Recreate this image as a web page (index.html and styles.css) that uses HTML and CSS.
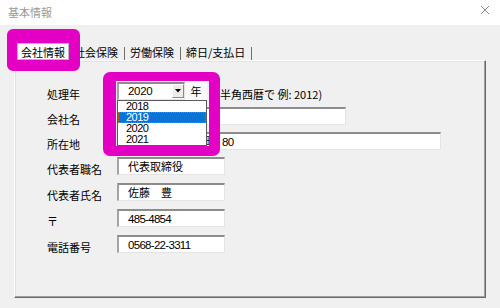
FILE: index.html
```html
<!DOCTYPE html>
<html lang="ja">
<head>
<meta charset="utf-8">
<title>基本情報</title>
<link rel="stylesheet" href="styles.css">
</head>
<body>
<div class="window">
  <div class="titlebar">
    <span class="title">基本情報</span>
    <svg class="close" width="10" height="10" viewBox="0 0 10 10"><path d="M1 1L9 9M9 1L1 9" stroke="#8a8a8a" stroke-width="1"/></svg>
  </div>
  <div class="client">
    <div class="tabs">
      <div class="tab active">会社情報</div>
      <div class="tab">社会保険</div>
      <div class="tab">労働保険</div>
      <div class="tab">締日/支払日</div>
    </div>
    <div class="panel">
      <div class="form">
        <div class="row">
          <span class="label">処理年</span>
          <div class="combo">
            <span class="combo-value">2020</span>
            <span class="combo-btn"><svg width="6" height="4" viewBox="0 0 6 4"><path d="M0 0H6L3 3.5Z" fill="#000"/></svg></span>
          </div>
          <span class="unit">年</span>
          <span class="hint">（半角西暦で 例: 2012)</span>
        </div>
        <div class="row">
          <span class="label">会社名</span>
          <div class="field w-md"></div>
        </div>
        <div class="row">
          <span class="label">所在地</span>
          <div class="field w-lg"><span class="addr-head">春日井市鳥居松町</span><span class="num">80</span></div>
        </div>
        <div class="row">
          <span class="label">代表者職名</span>
          <div class="field w-sm">代表取締役</div>
        </div>
        <div class="row">
          <span class="label">代表者氏名</span>
          <div class="field w-sm">佐藤　豊</div>
        </div>
        <div class="row">
          <span class="label">〒</span>
          <div class="field w-sm"><span class="num">485-4854</span></div>
        </div>
        <div class="row">
          <span class="label">電話番号</span>
          <div class="field w-sm"><span class="num">0568-22-3311</span></div>
        </div>
      </div>
    </div>
  </div>
  <div class="listbox">
    <div class="item">2018</div>
    <div class="item selected">2019</div>
    <div class="item">2020</div>
    <div class="item">2021</div>
  </div>
  <div class="hl hl-tab"></div>
  <div class="hl hl-combo"></div>
</div>
</body>
</html>
```

FILE: styles.css
```css
* { box-sizing: border-box; }
html, body { margin: 0; padding: 0; }
body {
  font-family: "Noto Sans CJK JP", "Noto Sans", sans-serif;
  font-size: 11px;
  color: #000;
  background: #f0f0f0;
}
.window {
  position: relative;
  width: 500px;
  height: 308px;
  overflow: hidden;
}
.titlebar {
  height: 25px;
  background: #fff;
  display: flex;
  justify-content: space-between;
  align-items: flex-start;
  padding: 0 10px 0 8px;
}
.title {
  font-size: 11px;
  line-height: 24px;
  color: #9a9a9a;
}
.close { margin-top: 5px; }
.client {
  height: 283px;
  background: #f0f0f0;
  padding-top: 18px;
}
.tabs {
  display: flex;
  align-items: flex-end;
  height: 17px;
  margin-left: 17px;
}
.tab {
  height: 13px;
  line-height: 11px;
  padding: 0 6px 0 5px;
  border-right: 1px solid #6e6e6e;
  white-space: nowrap;
}
.tab.active {
  height: 17px;
  width: 52px;
  line-height: 16px;
  padding: 0 0 0 3px;
  background: #fcfcfc;
  border: 1px solid #b8b8b8;
}
.panel {
  margin-left: 14px;
  width: 472px;
  height: 238px;
  border: 1px solid;
  border-color: #fff #6a6a6a #6a6a6a #fff;
  box-shadow: inset -1px -1px 0 #a0a0a0, inset 1px 1px 0 #e3e3e3;
}
.form {
  padding: 21px 0 0 32px;
  display: grid;
  grid-template-rows: 25px 25px 25px 26px 26px 26px 26px;
}
.row {
  display: flex;
  align-items: flex-start;
}
.label {
  width: 70px;
  flex: none;
  margin-top: 5px;
  line-height: 14px;
}
.field {
  height: 18px;
  background: #fff;
  border-style: solid;
  border-width: 2px 1px 1px 2px;
  border-color: #8c8c8c #e4e4e4 #e4e4e4 #a4a4a4;
  padding-left: 9px;
  line-height: 14px;
  white-space: nowrap;
  overflow: hidden;
}
.w-sm { width: 108px; }
.w-md { width: 229px; }
.w-lg { width: 324px; }
.addr-head {
  display: inline-block;
  width: 94px;
  overflow: hidden;
  vertical-align: top;
}
.num {
  font-family: "Liberation Sans", sans-serif;
  font-size: 11.5px;
  letter-spacing: -0.7px;
}
.combo {
  width: 68px;
  height: 18px;
  display: flex;
  align-items: flex-start;
  background: #fff;
  border-style: solid;
  border-width: 2px 1px 1px 2px;
  border-color: #8c8c8c #e4e4e4 #e4e4e4 #a4a4a4;
}
.combo-value {
  flex: 1;
  padding-left: 9px;
  font-family: "Liberation Sans", sans-serif;
  font-size: 11.5px;
  letter-spacing: -0.3px;
  line-height: 14px;
}
.combo-btn {
  width: 12px;
  height: 14px;
  display: flex;
  align-items: center;
  justify-content: center;
  background: #ececec;
  border-style: solid;
  border-width: 1px;
  border-color: #fff #8a8a8a #8a8a8a #fff;
}
.unit {
  width: 22px;
  height: 18px;
  background: #fafafa;
  text-align: center;
  line-height: 19px;
}
.hint {
  margin-left: 2px;
  margin-top: 5px;
  line-height: 14px;
  white-space: nowrap;
}
.listbox {
  position: absolute;
  left: 117px;
  top: 100px;
  width: 90px;
  height: 46px;
  background: #fff;
  border: 1px solid #5a5a5a;
  font-family: "Liberation Sans", sans-serif;
  letter-spacing: -0.5px;
}
.item {
  height: 11px;
  line-height: 11px;
  padding-left: 8px;
  font-size: 11px;
}
.item.selected {
  background: #0a74d6;
  color: #fff;
  border: 1px dotted #b8722a;
  padding-left: 7px;
  line-height: 9px;
}
.hl {
  position: absolute;
  border-style: solid;
  border-color: #e300c4;
}
.hl-tab {
  left: 7px;
  top: 29px;
  width: 73px;
  height: 42px;
  border-width: 14px 11px 11px 10px;
  border-radius: 6px;
}
.hl-combo {
  left: 103px;
  top: 72px;
  width: 117px;
  height: 84px;
  border-width: 9px 11px 10px 13px;
  border-radius: 7px;
}
```
